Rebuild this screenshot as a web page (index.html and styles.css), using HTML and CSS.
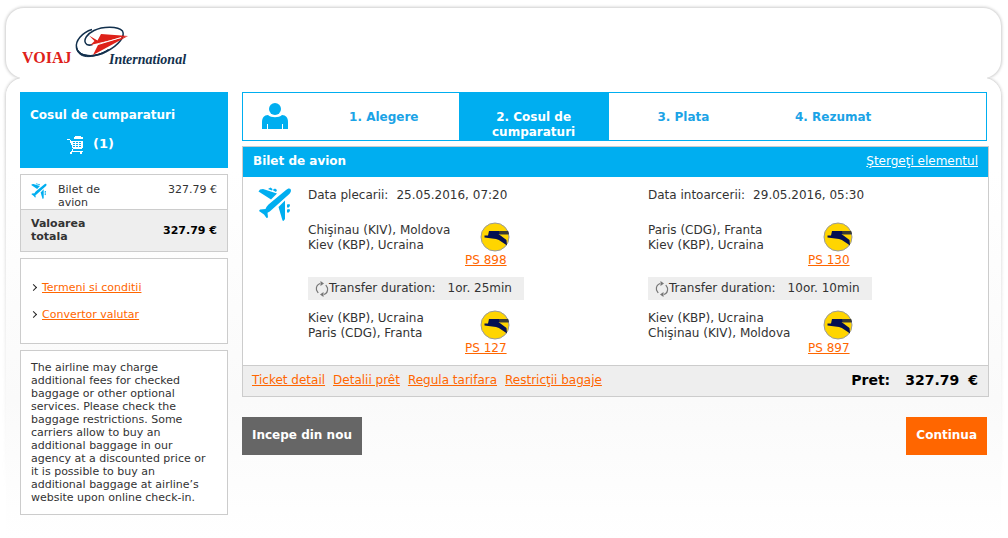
FILE: index.html
```html
<!DOCTYPE html>
<html lang="ro">
<head>
  <meta charset="UTF-8">
  <meta name="viewport" content="width=device-width, initial-scale=1.0">
  <title>Voiaj International - Cosul de cumparaturi</title>
  <link rel="stylesheet" href="styles.css">
</head>
<body>
  <!-- Shared icons -->
  <svg class="sprite" aria-hidden="true">
    <symbol id="icon-plane" viewBox="0 0 34 34">
      <path d="M32.500 2c1 1.500.3 3.500-1.200 5L14 22.500c-1.500 1.500-3 2.500-4.500 3.200L10 30.500 8.500 31 6 27.500 1 24l1-1.500 5.500-.5c.5-1.500 1.500-3 3-4.500L28 3c1.500-1.500 3.500-2 4.500-1z"/>
      <path d="M.5 4.500L2 2.500 5 2l14 4.500-6 6z"/>
      <path d="M27 13.500L27 32l-1.500 2-1-.5L20.500 20z"/>
      <path d="M10 2l2.500-1.500L14.500 2l-.5 1.500zM14.500 3l2.500-1.500L19 3l-1 2zM29 17.500l2.500-.5.500 2-2 2-1-1zM29 22.500l2.500-.5.500 2-2 2-1-1z"/>
    </symbol>
    <symbol id="icon-airline" viewBox="0 0 30 30">
      <circle cx="15" cy="15" r="14" fill="#ffd500" stroke="#9a9a9a" stroke-width="1"/>
      <path d="M9 9h19l.7 3.200H18.500l2 1.300 6 4.500.5 5.500c-4-2.500-7-5.500-11-6.500L4.500 15.500v-2H8z" fill="#041052"/>
      <path d="M19 9h9l.7 3.200h-9.200z" fill="#383a35"/>
    </symbol>
    <symbol id="icon-transfer" viewBox="0 0 14 16">
      <path d="M5 2.500C2.500 3.500 1 6 1.500 9l1.700 3M9 13.500c2.500-1 4-3.500 3.500-6.500l-1.700-3" fill="none" stroke="#777" stroke-width="1.200"/>
      <path d="M5.500 0l3.500 2.500L5.500 5zM8.500 11L5 13.500 8.500 16z" fill="#777"/>
    </symbol>
  </svg>

  <header class="header">
    <a class="logo" href="#" aria-label="Voiaj International">
      <svg width="170" height="44" viewBox="0 0 170 44">
        <path d="M70 3.500C60 6.500 53 15 54.500 22c2 9 18 10 30 3.500 12-6 19-15 16-20.500C96 0 81 0 72 4.500c-7 3.500-10.500 9-8.500 12.500 1 2 4 2.500 7 1.500" fill="none" stroke="#12304d" stroke-width="1.500"/>
        <path d="M54.500 20c1 11 17 13 32 3.500C71 34 54 33 54.500 20z" fill="#12304d" stroke="#12304d"/>
        <path d="M67 9.500l8.500 5L79 8l27 2-37.500 9 4-4z" fill="#de2119"/>
        <path d="M106 10L71 29l5.500-11z" fill="#de2119"/>
        <path d="M99 11.500L76 18.500" stroke="#fff" stroke-width="1"/>
        <text x="0" y="37" class="logo-main">VOIAJ</text>
        <text x="87" y="38" class="logo-sub">International</text>
      </svg>
    </a>
  </header>

  <div class="page">
    <aside class="sidebar">
      <div class="cart">
        <h2>Cosul de cumparaturi</h2>
        <a href="#" class="cart-count">
          <svg width="17" height="19" viewBox="0 0 17 19" aria-hidden="true" shape-rendering="crispEdges">
            <path d="M8 0h6v1h2v2H7V1h1zM0 3h3v1H0zM3 4h1v2H3zM3 5h13v7h-1v1H6v-1H5V9H4zM5 13h1v2H5zM4 15h12v1H4zM3 16h2v2H3zM13 16h2v2h-2z" fill="#fff"/>
            <path d="M6 6h2v1H6zM9 6h2v1H9zM12 6h2v1h-2zM6 8h2v1H6zM9 8h2v1H9zM12 8h2v1h-2zM6 10h2v1H6zM9 10h2v1H9zM12 10h2v1h-2z" fill="#00aef0"/>
          </svg>
          <span>(1)</span>
        </a>
      </div>

      <div class="box summary">
        <div class="summary-row">
          <svg class="plane" width="16" height="16" aria-hidden="true"><use href="#icon-plane"/></svg>
          <span class="summary-name">Bilet de avion</span>
          <span>327.79 €</span>
        </div>
        <div class="summary-total">
          <span class="total-name">Valoarea totala</span>
          <strong>327.79 €</strong>
        </div>
      </div>

      <ul class="box links">
        <li><a href="#">Termeni si conditii</a></li>
        <li><a href="#">Convertor valutar</a></li>
      </ul>

      <p class="box note">The airline may charge additional fees for checked baggage or other optional services. Please check the baggage restrictions. Some carriers allow to buy an additional baggage in our agency at a discounted price or it is possible to buy an additional baggage at airline’s website upon online check-in.</p>
    </aside>

    <main class="main">
      <ol class="steps">
        <li class="steps-icon">
          <svg width="28" height="26" viewBox="0 0 28 26" fill="#00aef0" aria-hidden="true">
            <circle cx="14" cy="6" r="6"/>
            <path d="M7 12c3 3 11 3 14 0 4 0 6 3 6 7v7h-5v-5h-1v5H7v-5H6v5H1v-7c0-4 2-7 6-7z"/>
          </svg>
        </li>
        <li>1. Alegere</li>
        <li class="active">2. Cosul de cumparaturi</li>
        <li>3. Plata</li>
        <li>4. Rezumat</li>
      </ol>

      <section class="ticket">
        <div class="ticket-head">
          <h1>Bilet de avion</h1>
          <a href="#">Ştergeţi elementul</a>
        </div>

        <div class="ticket-body">
          <svg class="plane" width="34" height="34" aria-hidden="true"><use href="#icon-plane"/></svg>

          <div class="trip">
            <p class="date"><span>Data plecarii:</span><span>25.05.2016, 07:20</span></p>
            <div class="flight">
              <p>Chişinau (KIV), Moldova<br>Kiev (KBP), Ucraina</p>
              <div class="flight-no">
                <svg width="30" height="30" aria-hidden="true"><use href="#icon-airline"/></svg>
                <a href="#">PS 898</a>
              </div>
            </div>
            <p class="transfer">
              <svg width="14" height="16" aria-hidden="true"><use href="#icon-transfer"/></svg>
              <span>Transfer duration:</span><span class="time">1or. 25min</span>
            </p>
            <div class="flight">
              <p>Kiev (KBP), Ucraina<br>Paris (CDG), Franta</p>
              <div class="flight-no">
                <svg width="30" height="30" aria-hidden="true"><use href="#icon-airline"/></svg>
                <a href="#">PS 127</a>
              </div>
            </div>
          </div>

          <div class="trip trip-return">
            <p class="date"><span>Data intoarcerii:</span><span>29.05.2016, 05:30</span></p>
            <div class="flight">
              <p>Paris (CDG), Franta<br>Kiev (KBP), Ucraina</p>
              <div class="flight-no">
                <svg width="30" height="30" aria-hidden="true"><use href="#icon-airline"/></svg>
                <a href="#">PS 130</a>
              </div>
            </div>
            <p class="transfer">
              <svg width="14" height="16" aria-hidden="true"><use href="#icon-transfer"/></svg>
              <span>Transfer duration:</span><span class="time">10or. 10min</span>
            </p>
            <div class="flight">
              <p>Kiev (KBP), Ucraina<br>Chişinau (KIV), Moldova</p>
              <div class="flight-no">
                <svg width="30" height="30" aria-hidden="true"><use href="#icon-airline"/></svg>
                <a href="#">PS 897</a>
              </div>
            </div>
          </div>
        </div>

        <div class="ticket-foot">
          <a href="#">Ticket detail</a>
          <a href="#">Detalii prêt</a>
          <a href="#">Regula tarifara</a>
          <a href="#">Restricţii bagaje</a>
          <strong class="price"><span>Pret:</span><span class="amount">327.79</span><span>€</span></strong>
        </div>
      </section>

      <div class="actions">
        <button type="button" class="btn btn-back">Incepe din nou</button>
        <button type="button" class="btn btn-next">Continua</button>
      </div>
    </main>
  </div>
</body>
</html>
```
FILE: styles.css
```css
* {
  margin: 0;
  padding: 0;
  box-sizing: border-box;
}

body {
  padding: 8px 7px 0 6px;
  background: #fff;
  color: #333;
  font-family: Verdana, 'DejaVu Sans', sans-serif;
  font-size: 12px;
  line-height: 15px;
}

a {
  color: #f60;
}

ul, ol {
  list-style: none;
}

.sprite {
  position: absolute;
  width: 0;
  height: 0;
}

.plane {
  fill: #00aef0;
}

/* Header */
.header {
  padding: 18px 16px 8px;
  border-radius: 18px;
  box-shadow: 0 0 3px 1px #ccc;
}

.logo svg {
  display: block;
}

.logo-main {
  font: bold 16px 'Liberation Serif', serif;
  fill: #de2119;
}

.logo-sub {
  font: italic bold 14px 'Liberation Serif', serif;
  fill: #12304d;
}

/* Page panel */
.page {
  position: relative;
  display: flex;
  align-items: flex-start;
  gap: 14px;
  padding: 14px 12px 23px 14px;
  border-radius: 18px 18px 0 0;
  background: linear-gradient(#fff 20%, #fafafa 70%, #fff);
}

/* side shadow that fades out towards the bottom */
.page::before {
  content: '';
  position: absolute;
  inset: 0;
  z-index: -1;
  border-radius: 18px 18px 0 0;
  box-shadow: 0 0 3px 1px #ccc;
  mask: linear-gradient(#000, transparent 90%) no-clip;
}

/* hides the seam between header and panel */
.page::after {
  content: '';
  position: absolute;
  top: -6px;
  left: 14px;
  right: 14px;
  height: 12px;
  background: #fff;
}

/* Sidebar */
.sidebar {
  flex: 0 0 208px;
  font-size: 11px;
  line-height: 13px;
}

.cart {
  padding: 16px 10px 13px;
  background: #00aef0;
  color: #fff;
}

.cart h2 {
  font-size: 12px;
  line-height: 15px;
}

.cart-count {
  display: flex;
  align-items: flex-start;
  gap: 9px;
  margin-top: 13px;
  padding-left: 37px;
  color: #fff;
  font-size: 13px;
  font-weight: bold;
  line-height: 15px;
  text-decoration: none;
}

.box {
  margin-top: 6px;
  border: 1px solid #ccc;
  background: #fff;
}

.summary-row {
  display: flex;
  padding: 8px 10px 0;
}

.summary-name {
  width: 60px;
  margin: 0 auto 0 11px;
}

.summary-total {
  display: flex;
  align-items: center;
  justify-content: space-between;
  padding: 7px 10px 8px;
  border-top: 1px solid #ccc;
  background: #eee;
  font-weight: bold;
}

.total-name {
  width: 80px;
}

.summary-total strong {
  color: #000;
}

.links {
  display: grid;
  gap: 14px;
  padding: 22px 10px;
}

.links li {
  display: flex;
  align-items: center;
}

.links li::before {
  content: '';
  width: 4px;
  height: 4px;
  margin-right: 6px;
  border: solid #222;
  border-width: 1px 1px 0 0;
  transform: rotate(45deg);
}

.note {
  padding: 10px 15px 10px 10px;
}

/* Steps */
.main {
  flex: 1;
  min-width: 0;
}

.steps {
  display: grid;
  grid-template-columns: 66fr repeat(4, 150fr) 78fr;
  margin-right: 2px;
  border: 1px solid #00aef0;
  background: #fff;
  color: #1ba3e6;
  font-weight: bold;
  text-align: center;
}

.steps li {
  padding: 17px 20px 0;
  min-height: 47px;
}

.steps .steps-icon {
  padding: 10px 18px 0;
  text-align: left;
}

.steps .active {
  background: #00aef0;
  color: #fff;
}

/* Ticket */
.ticket {
  margin-top: 5px;
  border: 1px solid #ccc;
  background: #fff;
}

.ticket-head {
  display: flex;
  justify-content: space-between;
  padding: 7px 10px 8px;
  background: #00aef0;
  color: #fff;
}

.ticket-head h1 {
  font-size: 12px;
}

.ticket-head a {
  color: #fff;
}

.ticket-body {
  display: grid;
  grid-template-columns: 65px 1fr 1fr;
  padding: 10px 0 9px;
}

.ticket-body .plane {
  margin-left: 15px;
}

.date {
  display: flex;
  gap: 8px;
  padding-top: 1px;
  margin-bottom: 19px;
}

.flight {
  display: grid;
  grid-template-columns: 157px auto;
}

.trip-return .flight {
  grid-template-columns: 160px auto;
}

.flight p {
  padding-top: 1px;
}

.flight-no svg {
  display: block;
  margin: 0 0 1px 15px;
}

.transfer {
  display: flex;
  align-items: center;
  width: fit-content;
  height: 23px;
  margin: 9px 0 10px;
  padding: 0 12px 0 7px;
  background: #eee;
}

.transfer .time {
  margin-left: 12px;
}

.ticket-foot {
  display: flex;
  align-items: center;
  gap: 8px;
  padding: 7px 10px 8px 9px;
  border-top: 1px solid #ccc;
  background: #eee;
}

.price {
  display: flex;
  gap: 9px;
  margin-left: auto;
  color: #000;
  font-size: 14px;
}

.amount {
  margin-left: 6px;
}

/* Buttons */
.actions {
  display: flex;
  justify-content: space-between;
  margin: 20px 2px 0 0;
}

.btn {
  padding: 11px 10px 12px;
  border: 0;
  color: #fff;
  font: bold 12px/15px Verdana, 'DejaVu Sans', sans-serif;
  cursor: pointer;
}

.btn-back {
  background: #666;
}

.btn-next {
  background: #f60;
}
```
